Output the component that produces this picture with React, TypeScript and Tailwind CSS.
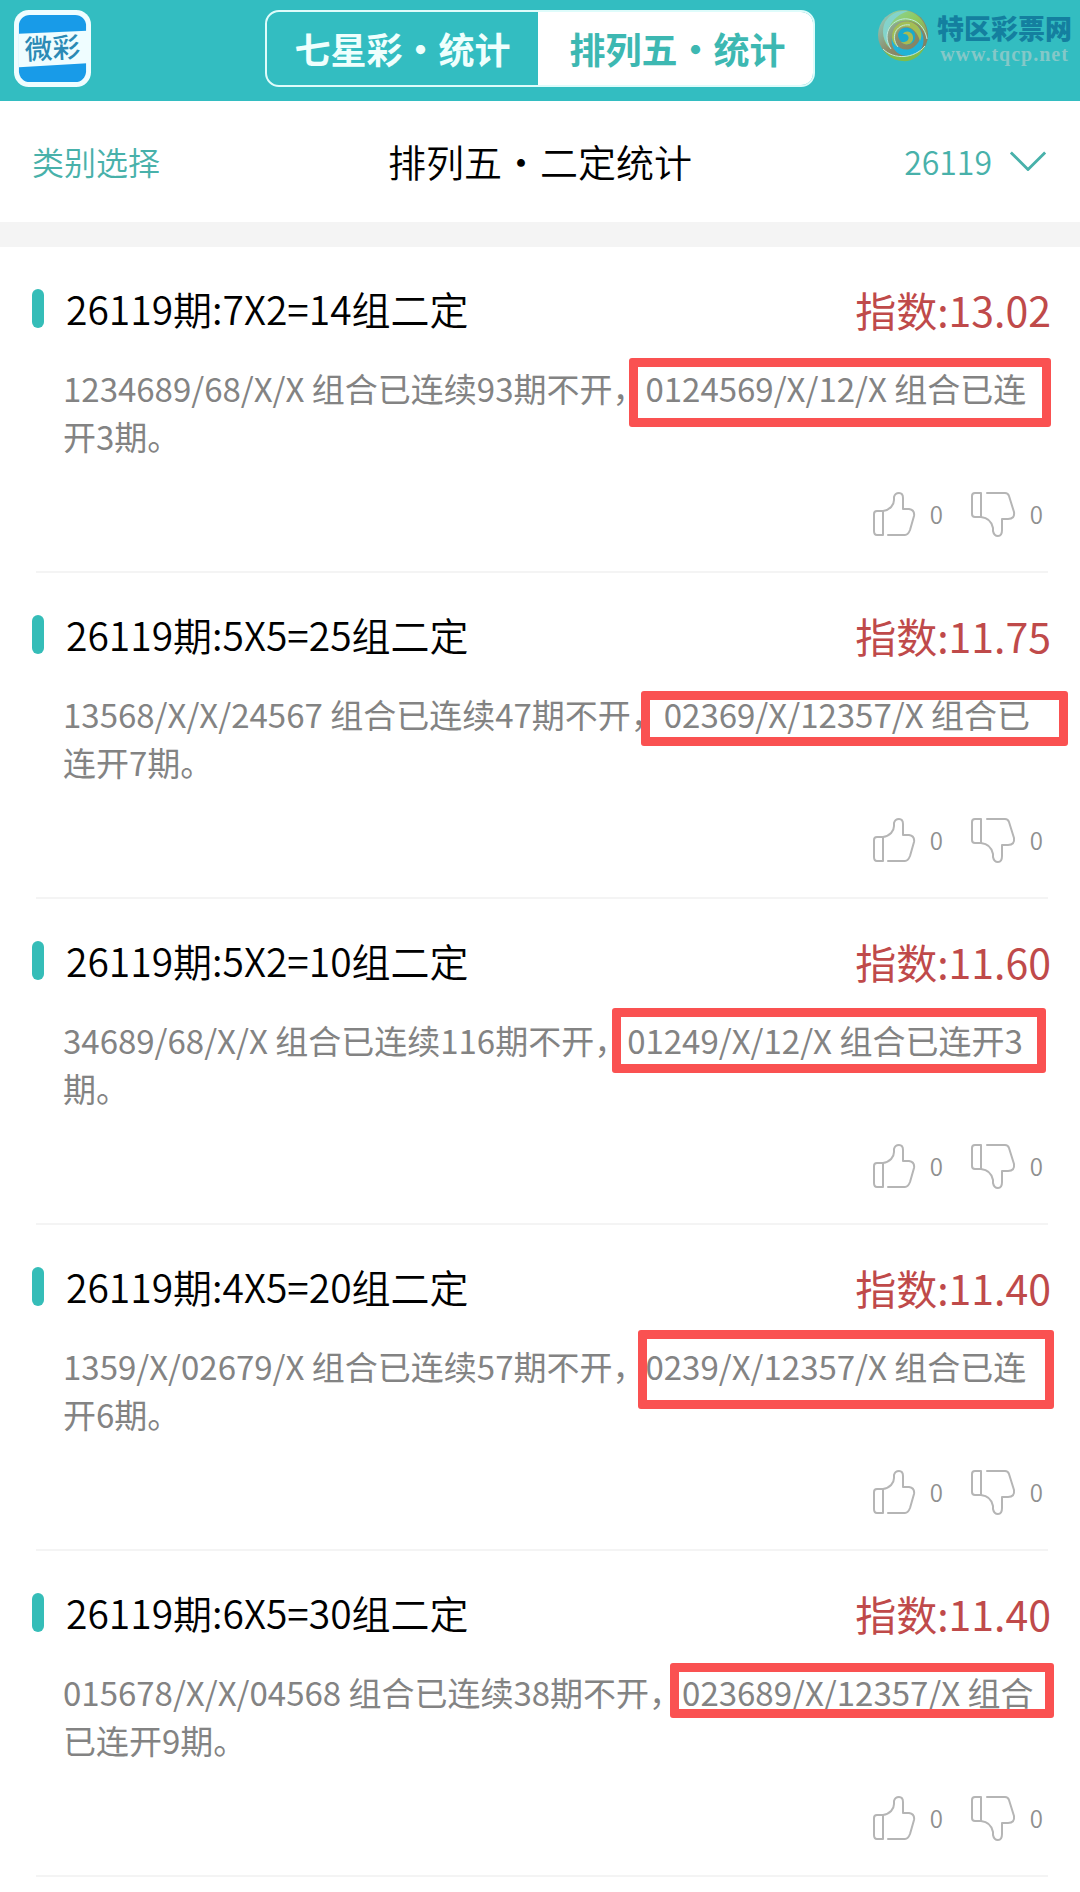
import { ChevronDown } from "lucide-react";

const ITEMS = [
  {
    title: "26119期:7X2=14组二定",
    score: "13.02",
    text: "1234689/68/X/X 组合已连续93期不开，0124569/X/12/X 组合已连开3期。",
    mark: "top-[111px] right-[29px] w-[422px] h-[69px]",
  },
  {
    title: "26119期:5X5=25组二定",
    score: "11.75",
    text: "13568/X/X/24567 组合已连续47期不开，02369/X/12357/X 组合已连开7期。",
    mark: "top-[118px] right-[12px] w-[427px] h-[55px]",
  },
  {
    title: "26119期:5X2=10组二定",
    score: "11.60",
    text: "34689/68/X/X 组合已连续116期不开，01249/X/12/X 组合已连开3期。",
    mark: "top-[109px] right-[34px] w-[434px] h-[65px]",
  },
  {
    title: "26119期:4X5=20组二定",
    score: "11.40",
    text: "1359/X/02679/X 组合已连续57期不开，0239/X/12357/X 组合已连开6期。",
    mark: "top-[105px] right-[26px] w-[416px] h-[79px]",
  },
  {
    title: "26119期:6X5=30组二定",
    score: "11.40",
    text: "015678/X/X/04568 组合已连续38期不开，023689/X/12357/X 组合已连开9期。",
    mark: "top-[112px] right-[26px] w-[384px] h-[55px]",
  },
];

function AppLogo() {
  return (
    <svg viewBox="0 0 78 78" className="size-[77px] shrink-0" role="img" aria-label="微彩">
      <rect width="78" height="78" rx="15" fill="#effdff" />
      <rect x="5" y="5" width="68" height="68" rx="11" fill="#189be8" />
      <path d="M5 24 L74 21 V54 L5 58 Z" fill="#effdff" />
      <text
        x="39"
        y="49"
        fontSize="28"
        fontWeight="500"
        textAnchor="middle"
        fill="#2b8ab5"
        transform="rotate(-3 39 40)"
      >
        微彩
      </text>
    </svg>
  );
}

function SwirlLogo() {
  return (
    <svg viewBox="0 0 52 54" className="h-[54px] w-[52px]" fill="none" aria-hidden="true">
      <defs>
        <linearGradient id="swirl-rim" x1="0" y1="0" x2="1" y2="1">
          <stop offset="0" stopColor="#8fd8cf" />
          <stop offset="0.5" stopColor="#8c8b68" />
          <stop offset="1" stopColor="#7b7c60" />
        </linearGradient>
        <linearGradient id="swirl-green" x1="0" y1="0" x2="1" y2="1">
          <stop offset="0" stopColor="#8ad6a8" />
          <stop offset="0.5" stopColor="#8fc95a" />
          <stop offset="1" stopColor="#8d8a63" />
        </linearGradient>
      </defs>
      <circle cx="26" cy="27" r="25" fill="url(#swirl-rim)" />
      <path d="M16 5 C32 -3 52 10 50 31 C45 14 31 8 17 16 C9 21 8 32 12 40 C2 28 6 12 16 5Z" fill="url(#swirl-green)" />
      <path d="M8 14 C14 5 22 2 31 3 C19 7 12 15 10 27 C10 32 11 36 14 41 C6 34 4 23 8 14Z" fill="#84d3cb" />
      <path d="M17 24 C14 38 27 46 37 39 C45 33 45 23 39 17 C51 26 49 47 31 48 C17 48 11 35 17 24Z" fill="#1fb3d8" />
      <path d="M15 29 C15 14 33 8 42 20 C45 24 45 29 43 33 C40 21 30 15 22 21 C17 25 17 34 21 39 C17 37 15 33 15 29Z" fill="#a3bf55" />
      <path d="M21 27 C22 18 35 17 38 26 C40 34 32 39 26 35 C23 33 21 30 21 27Z" fill="#19aacd" />
      <path d="M26 26 C29 21 37 24 36 31 C35 37 28 38 24 34 C30 35 33 31 31 28 C30 26 28 26 26 26Z" fill="#a6bb55" />
      <path d="M6 41 C17 52 37 51 48 38 C44 49 34 54 25 53 C16 52 10 48 6 41Z" fill="#7fbd4c" />
      <path
        d="M6 41 C17 52 37 51 48 38 M14 41 C3 24 17 9 31 11 C41 12 48 20 50 31 M21 39 C12 27 21 15 33 17"
        stroke="#bfe8de"
        strokeWidth="1"
      />
    </svg>
  );
}

function SiteMark() {
  return (
    <div className="absolute top-2 right-2 flex items-start gap-2">
      <SwirlLogo />
      <div className="flex flex-col items-center pt-1">
        <span className="text-[27px] leading-[32px] font-black text-[#147f9f]">特区彩票网</span>
        <span className="font-['Liberation_Serif',serif] text-[20px] leading-[20px] font-bold tracking-wider text-[#84c8c8]">
          www.tqcp.net
        </span>
      </div>
    </div>
  );
}

function ThumbUp() {
  return (
    <svg
      viewBox="0 0 44 46"
      className="h-[46px] w-[44px]"
      fill="none"
      stroke="#b5b5b5"
      strokeWidth="2"
      strokeLinecap="round"
      strokeLinejoin="round"
      aria-hidden="true"
    >
      <path d="M11 20 H5 Q2 20 2 23 V40 Q2 44 5 44 H10 M11 20 V44" />
      <path d="M11 20 C18 19 22 14 22 9 V6 Q23 2 27 2 Q31 2 31 7 V18 H37 Q43 19 42 25 L38 39 Q36 44 33 44 H16" />
    </svg>
  );
}

function ThumbDown() {
  return (
    <svg
      viewBox="0 0 46 46"
      className="size-[46px]"
      fill="none"
      stroke="#b5b5b5"
      strokeWidth="2"
      strokeLinecap="round"
      strokeLinejoin="round"
      aria-hidden="true"
    >
      <path d="M11 2 H5 Q2 2 2 5 V23 Q2 26 5 26 H11 V2" />
      <path d="M17 2 H35 Q38 2 39 5 L44 21 Q45 28 38 28 H32 V39 Q32 45 28 45 Q24 45 23 40 V37 Q21 27 11 26" />
    </svg>
  );
}

function StatItem({ item }: { item: (typeof ITEMS)[number] }) {
  return (
    <article className="relative h-[326px]">
      <div className="flex items-start justify-between pt-8 pr-[29px] pl-8">
        <div className="flex items-center gap-[22px]">
          <span className="h-[39px] w-[12px] rounded-full bg-[#35bdb8]" />
          <h2 className="text-[39px] leading-[58px] text-black">{item.title}</h2>
        </div>
        <p className="text-[41px] leading-[61px] font-normal text-[#bf4a4a]">指数:{item.score}</p>
      </div>
      <p className="mt-6 pr-9 pl-[63px] text-[33px] leading-[48px] font-normal text-[#838383]">{item.text}</p>
      <div className="mt-[31px] flex items-center justify-end gap-[27px] pr-[37px] text-[24px] text-[#8f8f8f]">
        <button type="button" aria-label="赞" className="flex items-center gap-[14px]">
          <ThumbUp />
          <span>0</span>
        </button>
        <button type="button" aria-label="踩" className="flex items-center gap-[14px]">
          <ThumbDown />
          <span>0</span>
        </button>
      </div>
      <div className="absolute right-8 bottom-0 left-9 h-[2px] bg-[#f4f4f4]" />
      <div className={`absolute rounded-[3px] border-9 border-[#fa5151] ${item.mark}`} />
    </article>
  );
}

export default function App() {
  return (
    <div className="min-h-screen bg-white font-['Noto_Sans_CJK_SC',sans-serif] font-[350]" lang="zh-CN">
      <header className="relative flex h-[101px] items-start bg-[#33bdc1] px-[14px] pt-[10px]">
        <AppLogo />
        <nav className="absolute inset-x-0 mx-auto flex h-[77px] w-[550px] overflow-hidden rounded-[14px] border-2 border-[#dffcfb] text-[36px] font-bold">
          <button type="button" className="flex-1 pb-[2px] text-[#effffd]">
            七星彩・统计
          </button>
          <button type="button" className="flex-1 bg-white pb-[2px] pl-1 text-[#3db8b2]">
            排列五・统计
          </button>
        </nav>
        <SiteMark />
      </header>

      <div className="grid h-[121px] grid-cols-[1fr_auto_1fr] items-center px-8 pb-[2px] text-[32px] text-[#48b1aa]">
        <button type="button" className="justify-self-start">
          类别选择
        </button>
        <h1 className="text-[38px] text-black">排列五・二定统计</h1>
        <button type="button" className="flex items-center gap-4 justify-self-end">
          26119
          <ChevronDown viewBox="5 5 14 14" className="size-10" strokeWidth={1} strokeLinecap="butt" />
        </button>
      </div>

      <div className="h-[25px] bg-[#f4f4f4]" />

      <main>
        {ITEMS.map((item) => (
          <StatItem key={item.title} item={item} />
        ))}
      </main>
    </div>
  );
}
